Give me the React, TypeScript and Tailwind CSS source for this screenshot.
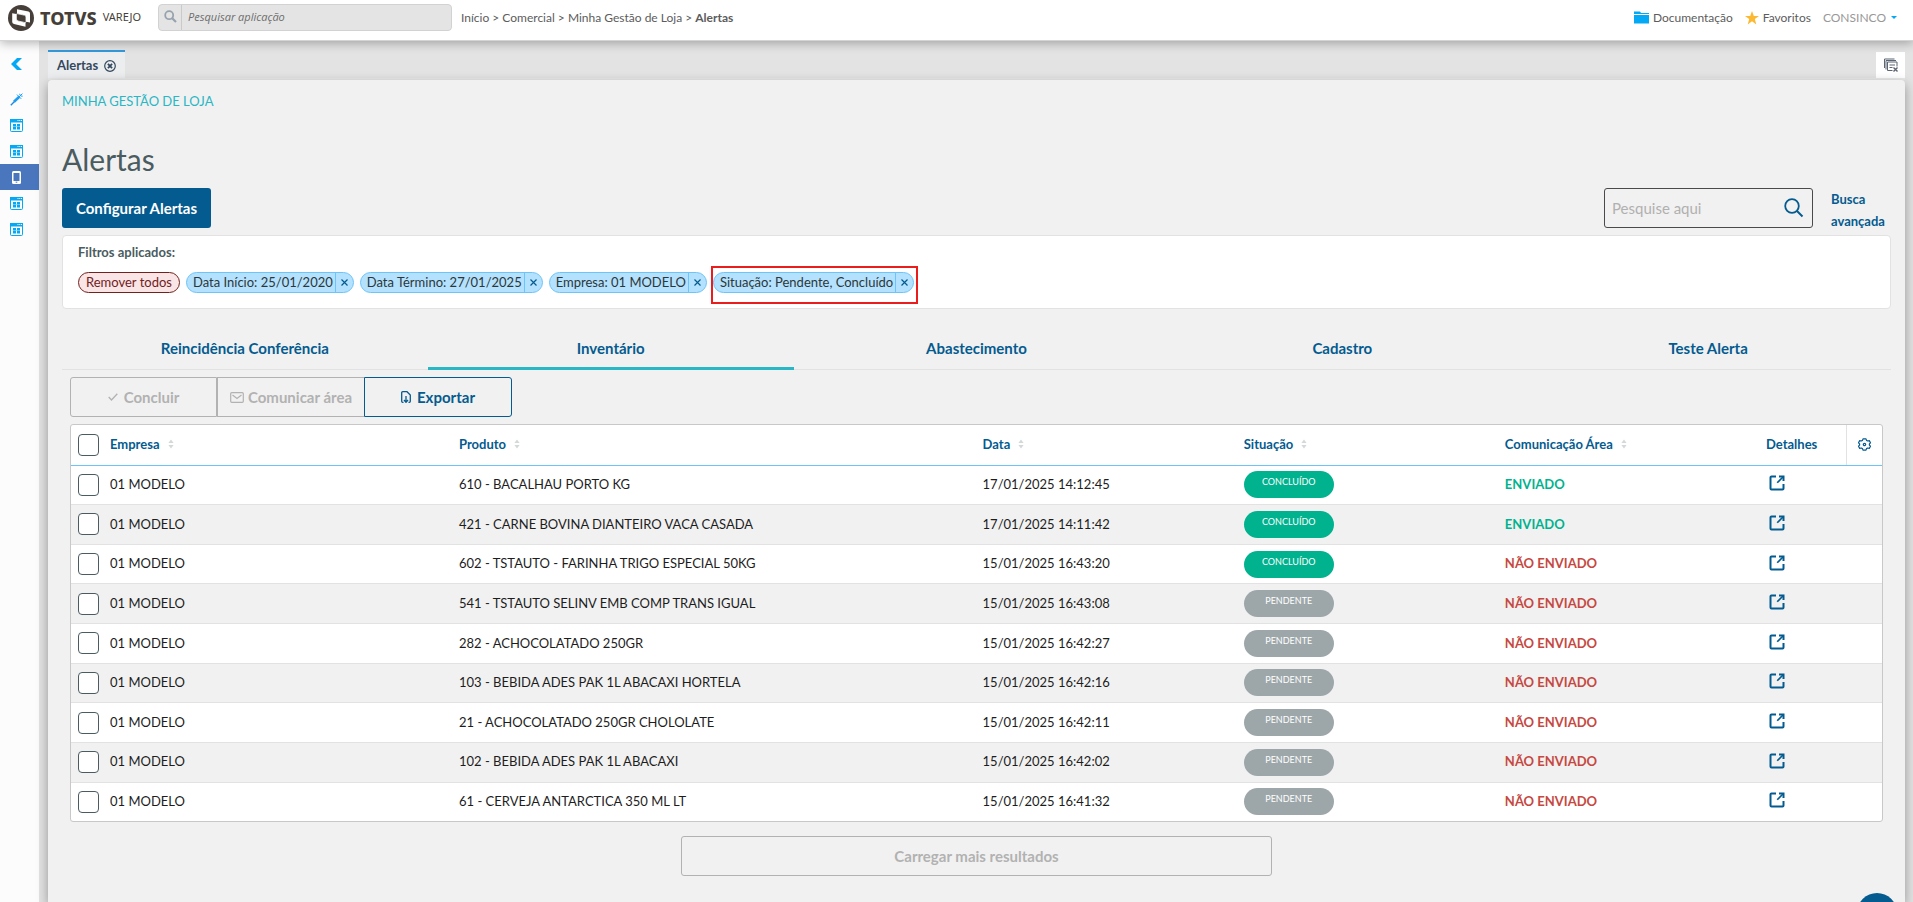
import * as React from "react";
import { useState } from "react";

const FILTERS = [
  "Data Início: 25/01/2020",
  "Data Término: 27/01/2025",
  "Empresa: 01 MODELO",
  "Situação: Pendente, Concluído",
];

const TABS = ["Reincidência Conferência", "Inventário", "Abastecimento", "Cadastro", "Teste Alerta"];

interface Alerta {
  produto: string;
  data: string;
  concluido?: boolean;
  enviado?: boolean;
}

const ALERTAS: Alerta[] = [
  { produto: "610 - BACALHAU PORTO KG", data: "17/01/2025 14:12:45", concluido: true, enviado: true },
  { produto: "421 - CARNE BOVINA DIANTEIRO VACA CASADA", data: "17/01/2025 14:11:42", concluido: true, enviado: true },
  { produto: "602 - TSTAUTO - FARINHA TRIGO ESPECIAL 50KG", data: "15/01/2025 16:43:20", concluido: true },
  { produto: "541 - TSTAUTO SELINV EMB COMP TRANS IGUAL", data: "15/01/2025 16:43:08" },
  { produto: "282 - ACHOCOLATADO 250GR", data: "15/01/2025 16:42:27" },
  { produto: "103 - BEBIDA ADES PAK 1L ABACAXI HORTELA", data: "15/01/2025 16:42:16" },
  { produto: "21 - ACHOCOLATADO 250GR CHOLOLATE", data: "15/01/2025 16:42:11" },
  { produto: "102 - BEBIDA ADES PAK 1L ABACAXI", data: "15/01/2025 16:42:02" },
  { produto: "61 - CERVEJA ANTARCTICA 350 ML LT", data: "15/01/2025 16:41:32" },
];

/* ---------- Icons ---------- */

function TotvsMark() {
  return (
    <svg width="26" height="26" viewBox="0 0 26 26" aria-hidden="true">
      <circle cx="13" cy="13" r="13" fill="#463f39" />
      {/* white ring band behind, dark screen in front */}
      <path d="M9 4.2 L20.5 6.6 Q22 7 22 8.5 V17.6 L18 16.8 V12 Q17.9 10.600 16.600 10.200 L9 8.600 Z" fill="#fff" />
      <path d="M4.200 8.200 L8.400 9.100 V14 Q8.600 15.600 10 16 L17.500 17.700 V21.800 L6 19 Q4.300 18.500 4.200 17 Z" fill="#fff" />
      <path d="M9 8.600 L16.600 10.200 Q17.900 10.600 18 12 V16.800 L17.500 17.700 L10 16 Q8.600 15.600 8.400 14 V9.100 Z" fill="#463f39" stroke="#fff" strokeWidth="0.800" />
    </svg>
  );
}

function WindowIcon() {
  return (
    <svg width="13" height="13" viewBox="0 0 13 13" aria-hidden="true">
      <rect x="0.5" y="0.5" width="12" height="12" rx="1" fill="#fff" stroke="#03a9f4" />
      <path d="M0 0h13v3.5H0z" fill="#03a9f4" />
      <path d="M7.5 1.5h1M9.3 1.5h1M11 1.5h1" stroke="#fff" />
      <path d="M3 5h3v5.500H3zM7 5h3v5.500H7z" fill="#03a9f4" />
      <path d="M3 7.500h7" stroke="#8bd6fa" strokeWidth="0.700" />
    </svg>
  );
}

function WandIcon() {
  return (
    <svg width="13" height="13" viewBox="0 0 13 13" aria-hidden="true">
      <path d="M0.8 12.2 L5.5 7.5" stroke="#1e88e5" strokeWidth="1.4" />
      <path d="M4 8.8 L9.3 3.7" stroke="#1e9df0" strokeWidth="2.6" />
      <path d="M9 4 L12.4 0.6 M7 1.6 L11.2 5.8 M9.6 0.8 L10.4 2.6 M10.8 3 L12.6 3.2" stroke="#1e9df0" strokeWidth="1" />
    </svg>
  );
}

function PhoneIcon() {
  return (
    <svg width="9" height="13" viewBox="0 0 9 13" aria-hidden="true">
      <rect width="9" height="13" rx="1.5" fill="#fff" />
      <path d="M1.5 2h6v8h-6z" fill="#4a76bd" />
      <path d="M3.7 11.2h1.6" stroke="#4a76bd" />
    </svg>
  );
}

function SortIcon() {
  return (
    <svg width="6" height="10" viewBox="0 0 6 10" className="mb-[2px]" aria-hidden="true">
      <path d="M3 0.5 L5.6 4 H0.4 Z M3 9.5 L5.6 6 H0.4 Z" fill="#d3d8d9" />
    </svg>
  );
}

function ExternalIcon() {
  return (
    <svg width="16" height="16" viewBox="0 0 16 16" fill="none" stroke="#045b8f" strokeWidth="2" aria-hidden="true">
      <path d="M7 1.5H2.5a1 1 0 0 0-1 1v11a1 1 0 0 0 1 1h11a1 1 0 0 0 1-1V9" />
      <path d="M10 1.5h4.5V6" />
      <path d="M14.2 1.8 L8.2 7.8" strokeWidth="1.6" />
    </svg>
  );
}

function GearIcon() {
  return (
    <svg width="13" height="13" viewBox="0 0 13 13" fill="none" stroke="#045b8f" aria-hidden="true">
      <path
        d="M5 0.9h3l.5 1.5 1.2.6 1.6-.4 1.2 2.2-1.1 1.1v1.2l1.1 1.1-1.2 2.2-1.6-.4-1.2.6L8 12.1H5l-.5-1.5-1.2-.6-1.6.4L.5 8.2l1.1-1.1V5.9L.5 4.8l1.2-2.2 1.6.4 1.2-.6z"
        strokeWidth="1.2"
        strokeLinejoin="round"
      />
      <circle cx="6.5" cy="6.5" r="1.2" strokeWidth="1.2" />
    </svg>
  );
}

/* ---------- Page parts ---------- */

function Header() {
  return (
    <header className="relative z-10 flex h-[41px] shrink-0 items-center border-b border-[#d4d4d4] bg-white pb-[5px] pl-2 pr-4 text-xs text-[#5c5c5c] shadow-[0_2px_10px_rgba(0,0,0,0.3)]">
      <div className="flex w-[150px] shrink-0 items-center text-[#463f39]">
        <TotvsMark />
        <span className="ml-[6px] font-['Noto_Sans'] text-lg leading-6 font-extrabold">TOTVS</span>
        <span className="ml-[6px] font-['Noto_Sans'] text-[11px]">VAREJO</span>
      </div>
      <label className="flex h-[27px] w-[294px] items-center rounded-sm border border-[#d2d2d2] bg-[#e4e4e4]">
        <span className="flex h-full w-[23px] shrink-0 items-center justify-center border-r border-[#cacaca] pb-[3px]">
          <svg width="13" height="13" viewBox="0 0 13 13" fill="none" stroke="#98a2ad" aria-hidden="true">
            <circle cx="5.2" cy="5.2" r="4" strokeWidth="1.8" />
            <path d="M8.2 8.2 L12 12" strokeWidth="2.2" />
          </svg>
        </span>
        <input
          type="text"
          aria-label="Pesquisar aplicação"
          placeholder="Pesquisar aplicação"
          className="w-full bg-transparent px-[6px] font-['Open_Sans'] text-[11px] italic outline-none placeholder:text-[#6d6d6d]"
        />
      </label>
      <nav className="ml-[9px] whitespace-nowrap">
        Início &gt; Comercial &gt; Minha Gestão de Loja &gt; <b>Alertas</b>
      </nav>
      <div className="ml-auto flex items-center whitespace-nowrap">
        <a href="#docs" className="flex items-center gap-1">
          <svg width="15" height="13" viewBox="0 0 15 13" fill="#03a9f4" aria-hidden="true">
            <path d="M0 0.5h6l1 1.5h8v1H0z M0 4h15v8.5H0z" />
          </svg>
          Documentação
        </a>
        <a href="#favoritos" className="ml-3 flex items-center gap-1">
          <svg width="14" height="14" viewBox="0 0 14 14" fill="#fbb830" aria-hidden="true">
            <path d="M7 0l1.8 4.9H14l-4.2 3.2L11.3 13.5 7 10.3 2.7 13.5l1.5-5.4L0 4.9h5.2z" />
          </svg>
          Favoritos
        </a>
        <button type="button" className="ml-3 flex items-center gap-[5px] text-[#989898]">
          CONSINCO
          <svg width="6" height="3" viewBox="0 0 6 3" fill="#03a9f4" aria-hidden="true">
            <path d="M0 0h6L3 3z" />
          </svg>
        </button>
      </div>
    </header>
  );
}

function Sidebar() {
  const items = [
    { label: "Assistente", icon: <WandIcon /> },
    { label: "Aplicação 1", icon: <WindowIcon /> },
    { label: "Aplicação 2", icon: <WindowIcon /> },
    { label: "Alertas", icon: <PhoneIcon />, active: true },
    { label: "Aplicação 3", icon: <WindowIcon /> },
    { label: "Aplicação 4", icon: <WindowIcon /> },
  ];

  return (
    <aside className="flex w-[39px] shrink-0 flex-col bg-[#fcfcfc]">
      <button type="button" aria-label="Recolher menu" className="flex h-[45px] items-center pl-[11px]">
        <svg width="11" height="12" viewBox="0 0 11 12" aria-hidden="true">
          <path d="M6 0h5L5 6l6 6H6L0 6z" fill="#03a9f4" />
        </svg>
      </button>
      {items.map((item) => (
        <button
          key={item.label}
          type="button"
          aria-label={item.label}
          className={`flex h-[26px] items-center justify-center pr-[6px] ${item.active ? "bg-[#4a76bd]" : ""}`}
        >
          {item.icon}
        </button>
      ))}
    </aside>
  );
}

function TabStrip() {
  return (
    <div className="flex h-[39px] shrink-0 items-end justify-between border-b-2 border-[#e9e9e9]">
      <div className="flex h-7 items-center gap-[6px] border-t-2 border-[#3498db] bg-[#ecedef] px-[9px] pt-[2px] text-[13px] font-bold text-[#34495e]">
        Alertas
        <button type="button" aria-label="Fechar aba">
          <svg width="12" height="12" viewBox="0 0 12 12" fill="none" stroke="#34495e" aria-hidden="true">
            <circle cx="6" cy="6" r="5.3" strokeWidth="1.2" />
            <path d="M3.9 3.9l4.2 4.2M8.1 3.9L3.9 8.1" strokeWidth="1.8" />
          </svg>
        </button>
      </div>
      <button type="button" aria-label="Fechar todas" className="flex h-[26px] w-[29px] items-center justify-center bg-white">
        <svg width="15" height="14" viewBox="0 0 15 14" fill="none" stroke="#5b6470" aria-hidden="true">
          <path d="M1.5 10V1h10M3 11.5V2.5h10" />
          <path d="M9.5 12.5h-5V4h9.5v4.5M6.5 7h5.5M6.5 9.5h3" />
          <path d="M10.5 9.5l4 4M14.5 9.5l-4 4" strokeWidth="1.4" />
        </svg>
      </button>
    </div>
  );
}

function Filters() {
  return (
    <section className="mt-[3px] h-[74px] rounded-sm border border-[#e2e2e2] bg-white px-[15px] pt-[6px]">
      <p className="text-[13px] leading-5 font-bold text-[#4a5c60]">Filtros aplicados:</p>
      <div className="mt-[10px] flex items-center gap-[6px] text-[13px]">
        <button type="button" className="h-[21px] rounded-full border border-[#72211d] bg-[#f9e5e5] px-[7px] text-[#72211d]">
          Remover todos
        </button>
        {FILTERS.map((filter, index) => (
          <span
            key={filter}
            className="relative flex h-[21px] items-center rounded-full border border-[#6dc4fa] bg-[#b4e1fd] pl-[6px] text-[#2c3739]"
          >
            {filter}
            <button
              type="button"
              aria-label={`Remover ${filter}`}
              className="ml-[2px] flex h-full w-[18px] items-center justify-center border-l border-[#6dc4fa]"
            >
              <svg width="7" height="7" viewBox="0 0 7 7" stroke="#045b8f" strokeWidth="1.2" aria-hidden="true">
                <path d="M0.5 0.5l6 6M6.5 0.5l-6 6" />
              </svg>
            </button>
            {/* Highlight around the last filter */}
            {index === FILTERS.length - 1 && (
              <span className="pointer-events-none absolute -top-[7px] -right-[5px] -bottom-3 -left-[3px] border-2 border-[#ea1c1c]" />
            )}
          </span>
        ))}
      </div>
    </section>
  );
}

function CheckBox({ label }: { label: string }) {
  return (
    <input
      type="checkbox"
      aria-label={label}
      className="mx-auto block h-[22px] w-[21px] appearance-none rounded-[4px] border border-[#4a5c60] bg-white checked:bg-[#045b8f]"
    />
  );
}

function AlertasTable() {
  return (
    <div className="mt-[7px] overflow-hidden rounded-[3px] border border-[#c8c8c8] bg-white">
      <table className="h-[396px] w-full table-fixed text-left text-[13px] text-[#1d1d1d]">
        <colgroup>
          <col className="w-[31px]" />
          <col className="w-[19.27%]" />
          <col />
          <col className="w-[14.42%]" />
          <col className="w-[14.42%]" />
          <col className="w-[14.42%]" />
          <col className="w-[88px]" />
          <col className="w-[36px]" />
        </colgroup>
        <thead>
          <tr className="h-10 text-[#045b8f] [&>th]:border-b [&>th]:border-b-[#6dc4fa]">
            <th className="pl-[3px]">
              <CheckBox label="Selecionar todos" />
            </th>
            {["Empresa", "Produto", "Data", "Situação", "Comunicação Área"].map((title) => (
              <th key={title} className="px-2 font-bold">
                <button type="button" className="flex items-center gap-2">
                  {title}
                  <SortIcon />
                </button>
              </th>
            ))}
            <th className="px-2 font-bold">Detalhes</th>
            <th className="border-l border-l-[#e2e2e2]">
              <button type="button" aria-label="Configurar colunas" className="mx-auto block">
                <GearIcon />
              </button>
            </th>
          </tr>
        </thead>
        <tbody>
          {ALERTAS.map((row) => (
            <tr key={row.data} className="border-b border-[#e2e2e2] last:border-b-0 even:bg-[#f1f1f1]">
              <td className="pl-[3px]">
                <CheckBox label={`Selecionar ${row.produto}`} />
              </td>
              <td className="px-2">01 MODELO</td>
              <td className="px-2">{row.produto}</td>
              <td className="px-2">{row.data}</td>
              <td className="px-2">
                <span
                  className={`flex h-[27px] w-[90px] justify-center rounded-full pt-[3px] text-[9px] leading-4 text-white ${
                    row.concluido ? "bg-[#00b28e]" : "bg-[#9da7a9]"
                  }`}
                >
                  {row.concluido ? "CONCLUÍDO" : "PENDENTE"}
                </span>
              </td>
              <td className={`px-2 font-bold ${row.enviado ? "text-[#00b28e]" : "text-[#c64840]"}`}>
                {row.enviado ? "ENVIADO" : "NÃO ENVIADO"}
              </td>
              <td className="px-[11px] pb-[3px]">
                <button type="button" aria-label={`Detalhes de ${row.produto}`} className="block">
                  <ExternalIcon />
                </button>
              </td>
              <td />
            </tr>
          ))}
        </tbody>
      </table>
    </div>
  );
}

function AlertasPage() {
  const [tab, setTab] = useState(1);

  return (
    <main className="flex-1 rounded-t-sm bg-[#f1f1f1] px-[14px] pt-[11px] shadow-[0_4px_12px_rgba(0,0,0,0.35)]">
      <a href="#loja" className="block text-[13px] leading-5 text-[#29b6c5]">
        MINHA GESTÃO DE LOJA
      </a>
      <h1 className="mt-7 text-[30px] leading-10 text-[#4a5c60]">Alertas</h1>

      <div className="mt-[9px] flex items-start justify-between">
        <button type="button" className="h-10 w-[149px] rounded-[3px] bg-[#045b8f] text-[15px] font-bold text-white">
          Configurar Alertas
        </button>
        <div className="flex items-start">
          <label className="flex h-10 w-[209px] items-center rounded-[3px] border border-[#4a4a4a] pr-2 pl-[7px]">
            <input
              type="text"
              aria-label="Pesquise aqui"
              placeholder="Pesquise aqui"
              className="w-full min-w-0 bg-transparent text-[15px] outline-none placeholder:text-[#b0b0b0]"
            />
            <svg width="20" height="20" viewBox="0 0 20 20" fill="none" stroke="#045b8f" className="shrink-0" aria-hidden="true">
              <circle cx="8" cy="8" r="6.8" strokeWidth="1.8" />
              <path d="M13 13l5.5 5.5" strokeWidth="2" />
            </svg>
          </label>
          <a href="#busca" className="ml-[18px] w-[60px] text-[13px] leading-[22px] font-bold text-[#045b8f]">
            Busca avançada
          </a>
        </div>
      </div>

      <Filters />

      <div role="tablist" className="mt-5 flex border-b border-[#e2e2e2]">
        {TABS.map((title, index) => (
          <button
            key={title}
            type="button"
            role="tab"
            aria-selected={tab === index}
            onClick={() => setTab(index)}
            className={`-mb-px h-[41px] flex-1 border-b-[3px] text-[15px] font-bold text-[#045b8f] ${
              tab === index ? "border-[#29b6c5]" : "border-transparent"
            }`}
          >
            {title}
          </button>
        ))}
      </div>

      <div className="px-2">
        <div className="mt-[7px] flex text-[15px] font-bold">
          <button
            type="button"
            disabled
            className="flex h-10 w-[147px] items-center justify-center gap-[6px] rounded-l-[3px] border border-[#b2b2b2] text-[#b2b2b2]"
          >
            <svg width="10" height="8" viewBox="0 0 10 8" fill="none" stroke="currentColor" strokeWidth="1.3" aria-hidden="true">
              <path d="M0.7 4l2.8 3L9.3 0.8" />
            </svg>
            Concluir
          </button>
          <button
            type="button"
            disabled
            className="flex h-10 w-[147px] items-center justify-center gap-1 border-y border-l border-[#b2b2b2] text-[#b2b2b2]"
          >
            <svg width="14" height="11" viewBox="0 0 14 11" fill="none" stroke="currentColor" strokeWidth="1.2" aria-hidden="true">
              <rect x="0.7" y="0.7" width="12.6" height="9.6" rx="1" />
              <path d="M2.5 3L7 6.5 11.5 3" />
            </svg>
            Comunicar área
          </button>
          <button
            type="button"
            className="flex h-10 w-[148px] items-center justify-center gap-[6px] rounded-r-[3px] border border-[#045b8f] text-[#045b8f]"
          >
            <svg width="10" height="12" viewBox="0 0 10 12" fill="none" stroke="currentColor" strokeWidth="1.3" aria-hidden="true">
              <path d="M2.5 11.3H1.7a1 1 0 0 1-1-1V1.7a1 1 0 0 1 1-1H6l3.3 3.3v6.3a1 1 0 0 1-1 1H7.5" />
              <path d="M5 5v6M3 9l2 2.3L7 9" />
            </svg>
            Exportar
          </button>
        </div>

        <AlertasTable />

        <div className="mx-auto mt-[14px] w-1/3 px-[7px]">
          <button type="button" className="h-10 w-full rounded-[3px] border border-[#b2b2b2] text-[15px] font-bold text-[#b2b2b2]">
            Carregar mais resultados
          </button>
        </div>
      </div>
    </main>
  );
}

export default function App() {
  return (
    <div className="flex h-screen flex-col overflow-hidden bg-[#e3e3e3] font-['Lato',sans-serif]">
      <Header />
      <div className="flex min-h-0 flex-1">
        <Sidebar />
        <div className="flex min-w-0 flex-1 flex-col pr-2 pl-[9px]">
          <TabStrip />
          <AlertasPage />
        </div>
      </div>
      <button
        type="button"
        aria-label="Ajuda"
        className="fixed right-4 -bottom-[31px] z-20 h-10 w-10 rounded-full bg-[#045b8f]"
      />
    </div>
  );
}
